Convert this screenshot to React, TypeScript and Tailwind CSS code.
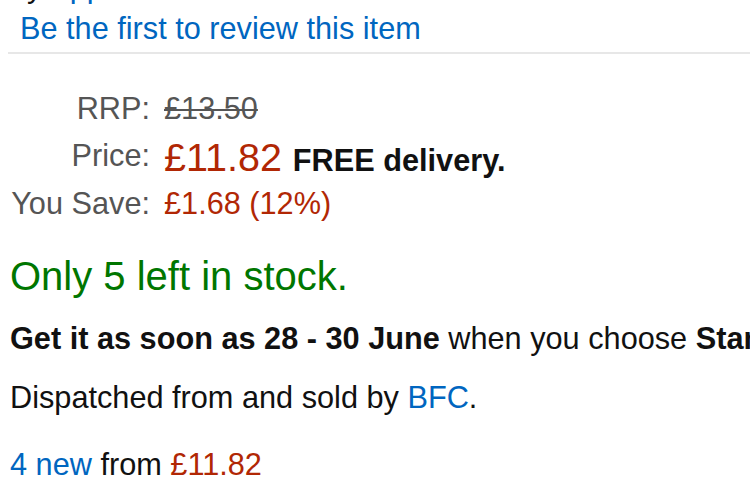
import React from "react";

export default function App() {
  return (
    <div
      className="w-[750px] h-[500px] overflow-hidden bg-white text-[#111111] whitespace-nowrap"
      style={{ fontFamily: '"Liberation Sans", Arial, sans-serif' }}
    >
      <div className="pl-[10px] text-[30.7px] leading-[34px]">
        {/* clipped byline above */}
        <div className="-mt-[30px] h-[34px]">
          <span>by </span>
          <span className="text-[#0066c0]">Apple</span>
        </div>

        <div className="mt-[8px] ml-[10px] h-[34px] text-[#0066c0]">
          Be the first to review this item
        </div>

        <div className="mt-[6px] -ml-[2px] h-[2px] bg-[#e7e7e7]" />

        <div className="mt-[38px] flex flex-col">
          <div className="flex items-start h-[34px]">
            <div className="w-[140px] text-right text-[#555555]">RRP:</div>
            <div className="ml-[14px] text-[#555555] line-through decoration-[2px]">£13.50</div>
          </div>

          <div className="mt-[9px] flex items-start h-[44px]">
            <div className="w-[140px] mt-[4px] text-right text-[#555555]">Price:</div>
            <div className="ml-[14px] leading-[44px]">
              <span className="text-[39.5px] text-[#B12704]">£11.82 </span>
              <span className="font-bold text-[#111111]">FREE delivery.</span>
            </div>
          </div>

          <div className="mt-[8px] flex items-start h-[34px]">
            <div className="w-[140px] text-right text-[#555555]">You Save:</div>
            <div className="ml-[14px] text-[#B12704]">£1.68 (12%)</div>
          </div>
        </div>

        <div className="mt-[32px] h-[46px] text-[40px] leading-[46px] text-[#007600]">
          Only 5 left in stock.
        </div>

        <div className="mt-[23px] h-[34px]">
          <span className="font-bold">Get it as soon as 28 - 30 June</span>
          <span> when you choose </span>
          <span className="font-bold">Standard Delivery</span>
          <span> at checkout.</span>
        </div>

        <div className="mt-[25px] h-[34px]">
          Dispatched from and sold by <span className="text-[#0066c0]">BFC</span>.
        </div>

        <div className="mt-[33px] h-[34px]">
          <span className="text-[#0066c0]">4 new</span>
          <span> from </span>
          <span className="text-[#B12704]">£11.82</span>
        </div>
      </div>
    </div>
  );
}
